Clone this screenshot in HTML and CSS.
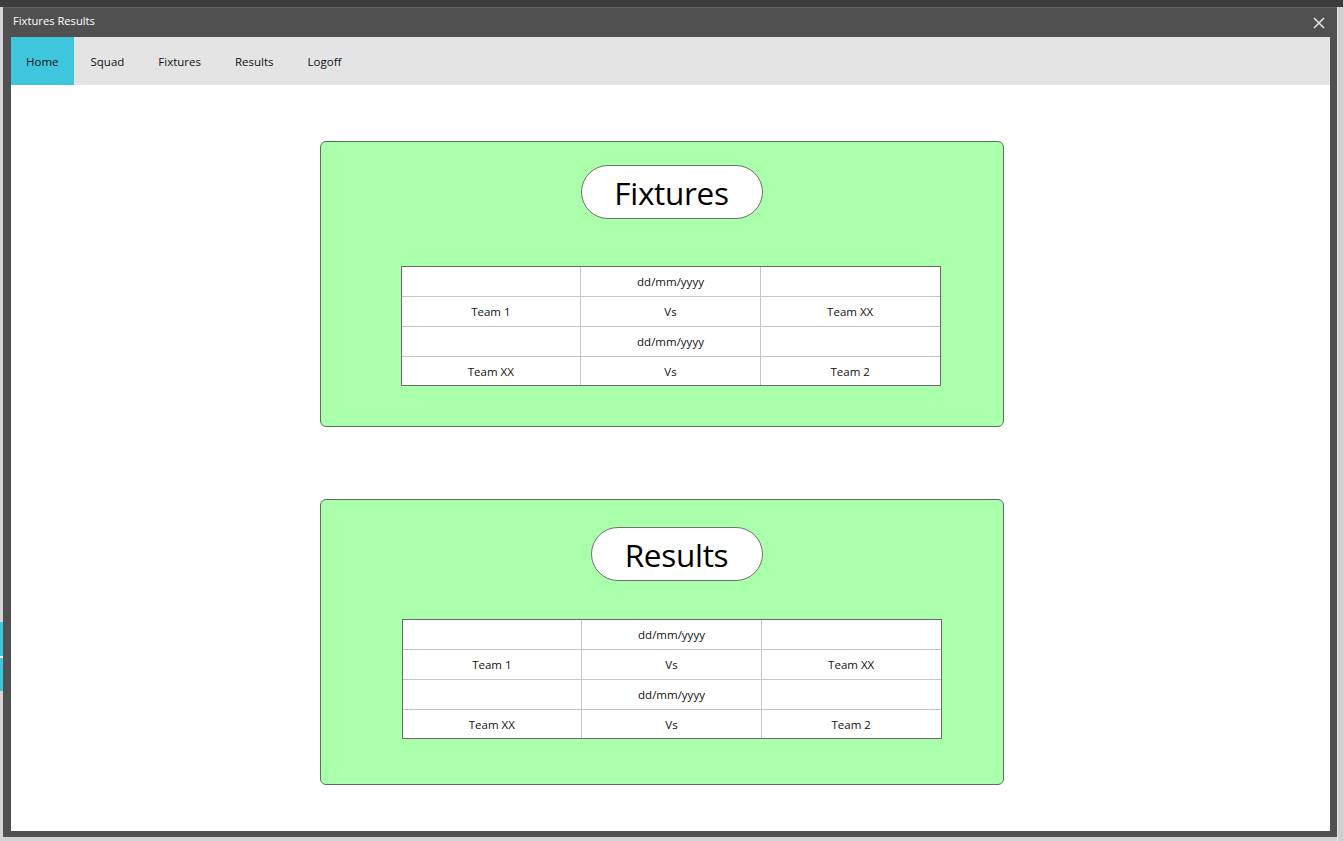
FILE: index.html
```html
<!DOCTYPE html>
<html lang="en">
<head>
<meta charset="utf-8">
<title>Fixtures Results</title>
<link rel="stylesheet" href="styles.css">
</head>
<body>
<div class="topstrip"></div>
<div class="desk">
  <div class="gutter-left">
    <div class="gutter-space"></div>
    <div class="gutter-blue gb1"></div>
    <div class="gutter-sep"></div>
    <div class="gutter-blue gb2"></div>
  </div>
  <div class="window">
    <div class="titlebar">
      <span class="title">Fixtures Results</span>
      <svg class="close" width="12" height="12" viewBox="0 0 12 12"><path d="M1 1 L11 11 M11 1 L1 11" stroke="#e2e2e2" stroke-width="1.6" fill="none"/></svg>
    </div>
    <div class="client">
      <nav class="nav">
        <div class="tab active">Home</div>
        <div class="tab">Squad</div>
        <div class="tab">Fixtures</div>
        <div class="tab">Results</div>
        <div class="tab">Logoff</div>
      </nav>
      <main class="content">
        <section class="card card-fixtures">
          <div class="pill pill-fixtures">Fixtures</div>
          <div class="grid">
            <div class="cell"></div><div class="cell">dd/mm/yyyy</div><div class="cell"></div>
            <div class="cell">Team 1</div><div class="cell">Vs</div><div class="cell">Team XX</div>
            <div class="cell"></div><div class="cell">dd/mm/yyyy</div><div class="cell"></div>
            <div class="cell">Team XX</div><div class="cell">Vs</div><div class="cell">Team 2</div>
          </div>
        </section>
        <section class="card card-results">
          <div class="pill pill-results">Results</div>
          <div class="grid">
            <div class="cell"></div><div class="cell">dd/mm/yyyy</div><div class="cell"></div>
            <div class="cell">Team 1</div><div class="cell">Vs</div><div class="cell">Team XX</div>
            <div class="cell"></div><div class="cell">dd/mm/yyyy</div><div class="cell"></div>
            <div class="cell">Team XX</div><div class="cell">Vs</div><div class="cell">Team 2</div>
          </div>
        </section>
      </main>
    </div>
  </div>
  <div class="gutter-right"></div>
</div>
</body>
</html>
```
FILE: styles.css
```css
* { box-sizing: border-box; }
html, body { margin: 0; padding: 0; }
body {
  width: 1343px;
  height: 841px;
  overflow: hidden;
  background: #d4d4d4;
  font-family: "Open Sans", "Noto Sans", "Liberation Sans", sans-serif;
  font-size: 12px;
  color: #000;
}
.topstrip { height: 7px; background: #3c3c3c; }
.desk { display: flex; height: 834px; }
.gutter-left { width: 3px; display: flex; flex-direction: column; background: #d6d6d6; }
.gutter-space { height: 615px; }
.gutter-blue { background: #3ec6de; }
.gb1 { height: 34px; }
.gutter-sep { height: 2px; background: #f0f0f0; }
.gb2 { height: 33px; }
.gutter-right { width: 6px; background: #cfcfcf; border-left: 1px solid #e6e6e6; }
.window {
  width: 1334px;
  height: 830px;
  background: #505050;
  border-top: 1px solid #636363;
  padding: 0 7px 6px 8px;
  display: flex;
  flex-direction: column;
}
.titlebar {
  height: 29px;
  display: flex;
  align-items: center;
  justify-content: space-between;
  margin: 0 -7px 0 -8px;
  padding: 0 12px 0 10px;
  color: #ffffff;
}
.title { font-size: 11.2px; margin-top: -4px; }
.close { display: block; }
.client { flex: 1; display: flex; flex-direction: column; background: #fff; }
.nav { height: 48px; background: #e4e4e4; display: flex; }
.tab {
  height: 48px;
  line-height: 50px;
  padding: 0 17px;
  font-size: 11.5px;
  color: #111;
}
.tab.active { background: #3fc6dd; padding: 0 15px; }
.content { flex: 1; padding-top: 56px; }
.card {
  width: 684px;
  height: 286px;
  margin-left: 309px;
  background: #aaffaa;
  border: 1px solid #5d6e5d;
  border-radius: 6px;
  display: flex;
  flex-direction: column;
  align-items: center;
  padding-right: 63px;
}
.card-fixtures { padding-top: 23px; padding-left: 80px; }
.card-results { margin-top: 72px; padding-top: 27px; padding-left: 82px; }
.pill {
  height: 54px;
  background: #fff;
  border: 1px solid #707070;
  border-radius: 27px;
  display: flex;
  align-items: center;
  justify-content: center;
  font-size: 31.5px;
  color: #000;
  letter-spacing: -0.3px;
}
.pill-fixtures { width: 182px; margin-left: 2px; }
.pill-results { width: 172px; margin-left: 10px; }
.card-fixtures .grid { margin-top: 47px; }
.card-results .grid { margin-top: 38px; }
.grid {
  width: 540px;
  border: 1px solid #6a6a6a;
  background: #c6c6c6;
  display: grid;
  grid-template-columns: 1fr 1fr 1fr;
  grid-template-rows: 29px 29px 29px 28px;
  gap: 1px;
}
.cell {
  background: #fff;
  display: flex;
  align-items: center;
  justify-content: center;
  font-size: 11.5px;
  color: #111;
}
```
